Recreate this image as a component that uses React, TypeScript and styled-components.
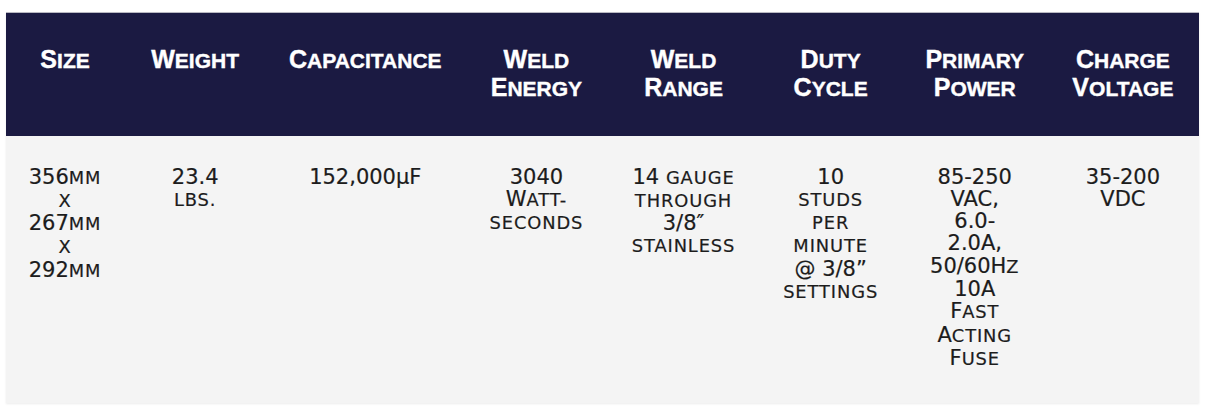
import React from 'react';
import styled, { createGlobalStyle } from 'styled-components';

const GlobalStyle = createGlobalStyle`
  html, body {
    margin: 0;
    padding: 0;
    background: #ffffff;
  }
`;

type Column = {
  title: string[];
  width: number;
};

const columns: Column[] = [
  { title: ['Size'], width: 118 },
  { title: ['Weight'], width: 142 },
  { title: ['Capacitance'], width: 198 },
  { title: ['Weld', 'Energy'], width: 144 },
  { title: ['Weld', 'Range'], width: 150 },
  { title: ['Duty', 'Cycle'], width: 144 },
  { title: ['Primary', 'Power'], width: 144 },
  { title: ['Charge', 'Voltage'], width: 152 },
];

function HeadWord({ word }: { word: string }) {
  return (
    <Line>
      <Initial>{word[0]}</Initial>
      {word.slice(1)}
    </Line>
  );
}

function SpecTable() {
  return (
    <Page>
      <Table>
        <colgroup>
          {columns.map((c) => (
            <col key={c.title.join(' ')} style={{ width: c.width }} />
          ))}
        </colgroup>
        <thead>
          <HeadRow>
            {columns.map((c) => (
              <HeadCell key={c.title.join(' ')}>
                {c.title.map((w) => (
                  <HeadWord key={w} word={w} />
                ))}
              </HeadCell>
            ))}
          </HeadRow>
        </thead>
        <tbody>
          <BodyRow>
            <Cell>
              356<Sc>mm</Sc>
              <br />
              <Sc>x</Sc>
              <br />
              267<Sc>mm</Sc>
              <br />
              <Sc>x</Sc>
              <br />
              292<Sc>mm</Sc>
            </Cell>
            <Cell>
              23.4
              <br />
              <Sc>lbs.</Sc>
            </Cell>
            <Cell>152,000µF</Cell>
            <Cell>
              3040
              <br />
              W<Sc>att-</Sc>
              <br />
              <Sc>seconds</Sc>
            </Cell>
            <Cell>
              14 <Sc>gauge</Sc>
              <br />
              <Sc>through</Sc>
              <br />
              3/8″
              <br />
              <Sc>stainless</Sc>
            </Cell>
            <Cell>
              10
              <br />
              <Sc>studs</Sc>
              <br />
              <Sc>per</Sc>
              <br />
              <Sc>minute</Sc>
              <br />
              @ 3/8”
              <br />
              <Sc>settings</Sc>
            </Cell>
            <Cell>
              85-250
              <br />
              VAC,
              <br />
              6.0-
              <br />
              2.0A,
              <br />
              50/60H<Sc>z</Sc>
              <br />
              10A
              <br />
              F<Sc>ast</Sc>
              <br />
              A<Sc>cting</Sc>
              <br />
              F<Sc>use</Sc>
            </Cell>
            <Cell>
              35-200
              <br />
              VDC
            </Cell>
          </BodyRow>
        </tbody>
      </Table>
    </Page>
  );
}

const Page = styled.div`
  padding: 12px 15px 16px 6px;
`;

const Table = styled.table`
  width: 1193px;
  table-layout: fixed;
  border-collapse: collapse;
  border-spacing: 0;
  border-top: 1px solid #b9b9c2;
  box-shadow: 0 1px 2px rgba(0, 0, 0, 0.08);
`;

const HeadRow = styled.tr`
  height: 123px;
  background: #1b1a42;
`;

const HeadCell = styled.th`
  padding: 34px 4px 0;
  vertical-align: top;
  text-align: center;
  font-family: 'Liberation Sans', Arial, sans-serif;
  font-weight: 700;
  font-size: 21px;
  line-height: 28px;
  text-transform: uppercase;
  color: #ffffff;
  -webkit-text-stroke: 0.4px #ffffff;
`;

const Line = styled.span`
  display: block;
  height: 28px;
  white-space: nowrap;
`;

const Initial = styled.span`
  font-size: 25px;
  line-height: 1;
`;

const BodyRow = styled.tr`
  height: 267px;
  background: #f4f4f4;
`;

const Cell = styled.td`
  padding: 30px 4px 0;
  vertical-align: top;
  text-align: center;
  font-family: 'DejaVu Sans', 'Liberation Sans', sans-serif;
  font-size: 21px;
  line-height: 22.3px;
  color: #1c1c1c;
  white-space: nowrap;
  -webkit-text-stroke: 0.2px #1c1c1c;
`;

const Sc = styled.span`
  font-size: 0.85em;
  letter-spacing: 0.05em;
  text-transform: uppercase;
`;

export default function App() {
  return (
    <>
      <GlobalStyle />
      <SpecTable />
    </>
  );
}
